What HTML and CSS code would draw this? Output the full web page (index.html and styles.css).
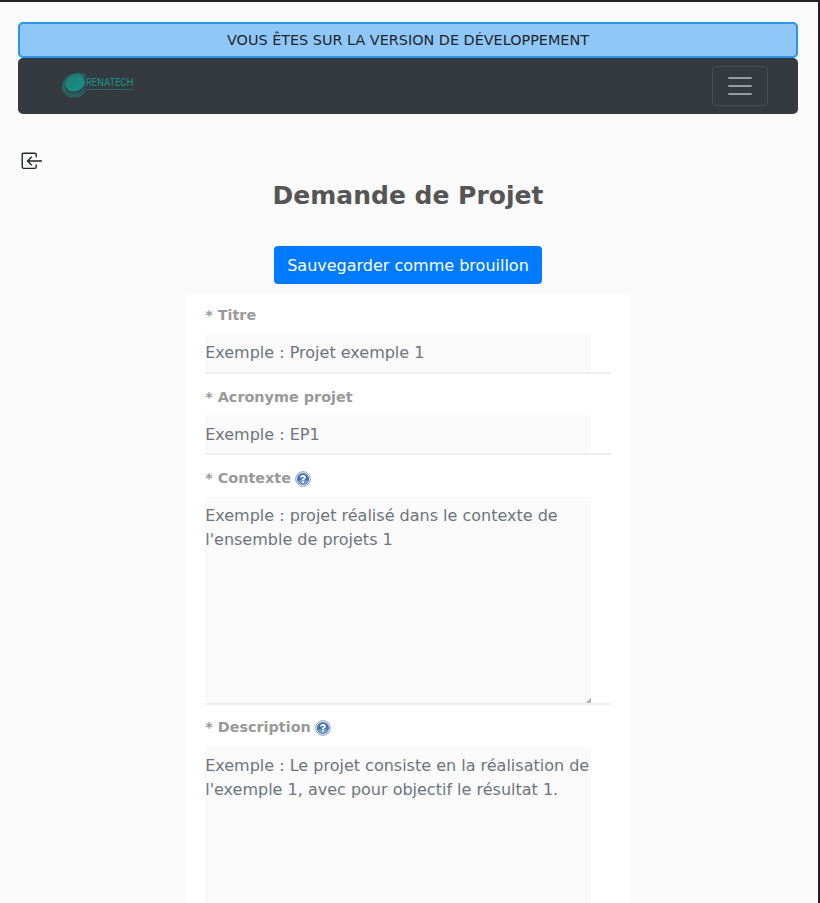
FILE: index.html
```html
<!DOCTYPE html>
<html lang="fr">
<head>
<meta charset="utf-8">
<title>Demande de Projet</title>
<link rel="stylesheet" href="styles.css">
</head>
<body>
<div class="page">
  <div class="banner">VOUS ÊTES SUR LA VERSION DE DÉVELOPPEMENT</div>
  <nav class="navbar">
    <svg class="logo" width="74" height="28" viewBox="0 0 74 28">
      <defs>
        <linearGradient id="disc" x1="0" y1="0" x2="0" y2="1">
          <stop offset="0" stop-color="#1d8078"/>
          <stop offset="1" stop-color="#168f84"/>
        </linearGradient>
      </defs>
      <g fill="none" stroke="#17968a" stroke-width=".7">
        <path d="M25.500 4C22 .8 12 .3 6 5.300C1 10 .2 17 4 21.500C9 27 19 26 23 20.500"/>
        <path d="M25 5.500C21 1.500 12 1.700 7 6.300C2.500 10.800 1.500 16.500 5 20.500C10 25.500 20 24 24 18"/>
        <path d="M3 14.500C4 23 18 25 24.500 15.500"/>
      </g>
      <ellipse cx="14.200" cy="11.200" rx="10.200" ry="8.200" transform="rotate(-22 14.200 11.200)" fill="url(#disc)"/>
      <text class="logo-name" x="25" y="14" textLength="47.500" lengthAdjust="spacingAndGlyphs">RENATECH</text>
      <text class="logo-tag" x="25" y="17.700" textLength="47" lengthAdjust="spacingAndGlyphs">French national nanofabrication network</text>
    </svg>
    <button class="toggler" type="button" aria-label="Menu">
      <svg width="30" height="30" viewBox="0 0 30 30"><path d="M4 7h22M4 15h22M4 23h22" stroke="rgba(255,255,255,.5)" stroke-width="2" stroke-linecap="round" stroke-miterlimit="10"/></svg>
    </button>
  </nav>
  <a class="back">
    <svg width="22" height="18" viewBox="0 0 22 18" fill="none" stroke="#212529" stroke-width="1.400">
      <path d="M15.200 5.200V2.800Q15.200 1.200 13.600 1.200H2.800Q1.200 1.200 1.200 2.800V14.800Q1.200 16.400 2.800 16.400H13.600Q15.200 16.400 15.200 14.800V12.400"/>
      <path d="M21 9H6.500M10.800 4.700L6.500 9L10.800 13.300"/>
    </svg>
  </a>
  <main class="content">
    <h1>Demande de Projet</h1>
    <button class="save" type="button">Sauvegarder comme brouillon</button>
    <form class="card">
      <div class="group">
        <label for="titre">* Titre</label>
        <div class="field"><input id="titre" placeholder="Exemple : Projet exemple 1"></div>
      </div>
      <div class="group">
        <label for="acronyme">* Acronyme projet</label>
        <div class="field"><input id="acronyme" placeholder="Exemple : EP1"></div>
      </div>
      <div class="group">
        <label for="contexte">* Contexte
          <svg class="help" width="16" height="18" viewBox="0 0 16 18"><circle cx="8" cy="9" r="7.300" fill="#fff" stroke="#7d99c4" stroke-width="1"/><circle cx="8" cy="9" r="6.100" fill="#4a72ae"/><path d="M3 11a5.200 5.200 0 0 0 10 0Q8 8 3 11" fill="#7899c8"/><path d="M6 7.500Q6 5.800 8 5.800T10 7.500Q10 8.600 8 9.200V10.300M8 11.300V13" fill="none" stroke="#fff" stroke-width="1.700"/></svg>
        </label>
        <div class="field"><textarea id="contexte" placeholder="Exemple : projet réalisé dans le contexte de l'ensemble de projets 1"></textarea></div>
      </div>
      <div class="group">
        <label for="description">* Description
          <svg class="help" width="16" height="18" viewBox="0 0 16 18"><circle cx="8" cy="9" r="7.300" fill="#fff" stroke="#7d99c4" stroke-width="1"/><circle cx="8" cy="9" r="6.100" fill="#4a72ae"/><path d="M3 11a5.200 5.200 0 0 0 10 0Q8 8 3 11" fill="#7899c8"/><path d="M6 7.500Q6 5.800 8 5.800T10 7.500Q10 8.600 8 9.200V10.300M8 11.300V13" fill="none" stroke="#fff" stroke-width="1.700"/></svg>
        </label>
        <div class="field"><textarea id="description" placeholder="Exemple : Le projet consiste en la réalisation de l'exemple 1, avec pour objectif le résultat 1."></textarea></div>
      </div>
    </form>
  </main>
</div>
</body>
</html>
```
FILE: styles.css
```css
* { box-sizing: border-box; }
body {
  margin: 0;
  font: 16px/1.5 "DejaVu Sans", sans-serif;
  color: #212529;
  background: #fafafa;
}
.page {
  height: 903px;
  overflow: hidden;
  padding: 20px 20px 0 18px;
  border-top: 2px solid #242224;
  border-right: 2px solid #242224;
}
.banner {
  height: 36px;
  border: 2px solid #2c94ea;
  border-radius: 5px;
  background: #8fc8f8;
  font-size: 14.400px;
  line-height: 33px;
  text-align: center;
}
.navbar {
  display: flex;
  align-items: center;
  justify-content: space-between;
  height: 56px;
  padding: 0 30px 0 43px;
  border-radius: 5px;
  background: #343a40;
}
.logo { display: block; overflow: visible; }
.logo-name { font: 10.800px Roboto, sans-serif; fill: #17968a; }
.logo-tag { font: bold 2.400px Roboto, sans-serif; fill: #17968a; }
.toggler {
  display: flex;
  align-items: center;
  justify-content: center;
  width: 56px;
  height: 40px;
  padding: 0;
  border: 1px solid rgba(255, 255, 255, .1);
  border-radius: 4px;
  background: none;
}
.toggler svg { display: block; }
.back {
  display: block;
  height: 18px;
  margin: 38px 0 0 3px;
}
.back svg { display: block; }
.content {
  display: flex;
  flex-direction: column;
  align-items: center;
}
h1 {
  margin: 7px 0 32px;
  color: #555;
  font-size: 25px;
  line-height: 37px;
}
.save {
  height: 38px;
  padding: 2px 13px 0;
  border: 0;
  border-radius: 4px;
  background: #007bff;
  color: #fff;
  font: inherit;
}
.card {
  width: 446px;
  margin-top: 10px;
  padding: 10px 20px;
  border-radius: 8px;
  background: #fff;
}
.group { margin-bottom: 12px; }
label {
  display: flex;
  align-items: center;
  gap: 4.500px;
  height: 21.600px;
  margin-bottom: 8px;
  padding: 2px 0 0 .2px;
  color: #999;
  font-size: 14.400px;
  font-weight: 700;
}
.group:last-child label { padding-top: .6px; }
.field { border-bottom: 2px solid #eee; }
input, textarea {
  display: block;
  width: 386px;
  height: 38px;
  padding: 6px 0 6px .2px;
  border: 0;
  border-radius: 0;
  background: #fafafa;
  font: inherit;
}
textarea {
  height: 206px;
  padding: 7.200px 0 6px .2px;
}
textarea::-webkit-resizer {
  background: linear-gradient(135deg, transparent 50%, #bbb 50%) right bottom / 6px 6px no-repeat;
}
::placeholder { color: #6c757d; opacity: 1; }
```
